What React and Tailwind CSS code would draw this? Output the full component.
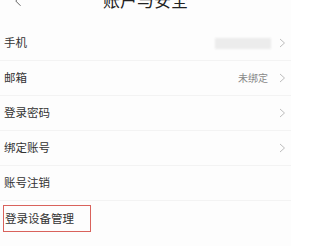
import { ChevronLeft } from "lucide-react";

const rows = [
  { label: "手机", blurred: true, arrow: true },
  { label: "邮箱", value: "未绑定", arrow: true },
  { label: "登录密码", arrow: true },
  { label: "绑定账号", arrow: true },
  { label: "账号注销" },
];

function Chevron() {
  return (
    <svg width="7" height="10" viewBox="0 0 7 10" className="shrink-0">
      <path d="M1 1l4.5 4L1 9" fill="none" stroke="#bdbdbd" strokeWidth="1" />
    </svg>
  );
}

export default function App() {
  return (
    <div
      className="h-[246px] w-[291px] overflow-hidden bg-[#fdfdfd] text-[#333]"
      style={{ fontFamily: '"Noto Sans CJK SC", "Noto Sans", sans-serif' }}
    >
      <header className="flex h-[26px] items-start">
        <div className="-mt-[8px] flex w-[40px] justify-start pl-[9px]">
          <ChevronLeft size={18} strokeWidth={1.2} color="#555" />
        </div>
        <h1 className="-mt-[10px] flex-1 pr-[40px] text-center text-[17px] leading-[20px] text-[#222]">
          账户与安全
        </h1>
      </header>

      <ul>
        {rows.map(({ label, value, blurred, arrow }) => (
          <li
            key={label}
            className="flex h-[35px] items-center border-b border-[#f3f3f3] pl-[4px] pr-[5px]"
          >
            <span className="flex-1 text-[11.5px] leading-none">{label}</span>
            {blurred && (
              <span className="mr-[8px] h-[11px] w-[56px] bg-[#ececec] blur-[1px]" />
            )}
            {value && (
              <span className="mr-[11px] text-[10px] leading-none text-[#888]">
                {value}
              </span>
            )}
            {arrow && <Chevron />}
          </li>
        ))}
        <li className="flex h-[35px] items-center pl-[3px]">
          <span className="flex h-[27px] w-[88px] items-center border-[1.5px] border-[#d9625c] pl-[1px] text-[11.5px] leading-none">
            登录设备管理
          </span>
        </li>
      </ul>
    </div>
  );
}
